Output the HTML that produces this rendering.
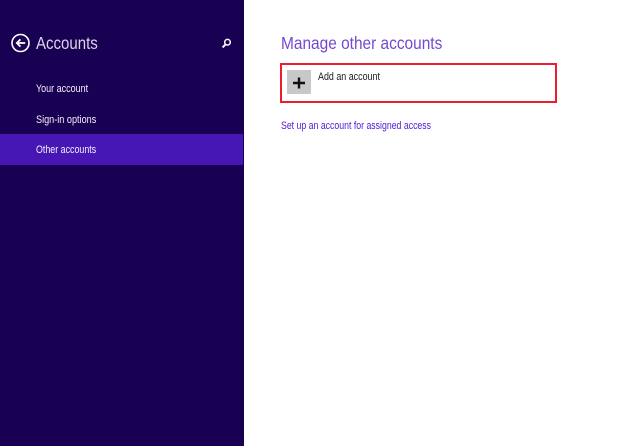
<!DOCTYPE html>
<html>
<head>
<meta charset="utf-8">
<style>
html,body{margin:0;padding:0;width:624px;height:446px;overflow:hidden;background:#fff;font-family:"Liberation Sans",sans-serif}
#page{position:relative;width:624px;height:446px;overflow:hidden}
#side{position:absolute;left:0;top:0;width:244px;height:446px;background:#180052}
#sel{position:absolute;left:0;top:134px;width:243px;height:31px;background:#4617b4}
.t{position:absolute;white-space:nowrap;line-height:1;transform-origin:0 50%;filter:blur(.3px)}
.nav{left:36px;font-size:11px;color:#f4f0fb}
svg{position:absolute;overflow:visible;filter:blur(.25px)}
</style>
</head>
<body>
<div id="page">
<div id="side"></div>
<div id="sel"></div>
<svg style="left:11px;top:33px" width="20" height="20" viewBox="0 0 20 20">
<circle cx="9.5" cy="10" r="8.5" fill="none" stroke="#fff" stroke-width="1.6"/>
<path d="M14.2 10H6M9.4 6.4L5.8 10L9.4 13.6" fill="none" stroke="#fff" stroke-width="1.8"/>
</svg>
<div class="t" style="left:36px;top:34.5px;font-size:17.5px;color:#dcd6ec;transform:scaleX(.858)">Accounts</div>
<svg style="left:221px;top:38px" width="11" height="11" viewBox="0 0 11 11">
<circle cx="6.5" cy="4.2" r="2.8" fill="none" stroke="#fff" stroke-width="1.5"/>
<path d="M4.5 6.4L1.6 9.4" stroke="#fff" stroke-width="2"/>
</svg>
<div class="t nav" style="top:83.5px;transform:scaleX(.817)">Your account</div>
<div class="t nav" style="top:114.5px;transform:scaleX(.828)">Sign-in options</div>
<div class="t nav" style="top:144.5px;transform:scaleX(.807)">Other accounts</div>

<div class="t" style="left:281px;top:34.5px;font-size:17.5px;color:#7548d2;transform:scaleX(.882)">Manage other accounts</div>
<div style="position:absolute;left:280px;top:63px;width:273px;height:36px;border:2px solid #ed1c2e"></div>
<div style="position:absolute;left:287px;top:70px;width:24px;height:24px;background:#c8c8c8"></div>
<svg style="left:287px;top:70px" width="24" height="24" viewBox="0 0 24 24">
<path d="M6 13H18M12 7.5V18.5" stroke="#111" stroke-width="2.4"/>
</svg>
<div class="t" style="left:318px;top:71.5px;font-size:11px;color:#1a1a1a;transform:scaleX(.81)">Add an account</div>
<div class="t" style="left:281px;top:121px;font-size:11px;color:#5218d4;transform:scaleX(.794)">Set up an account for assigned access</div>
</div>
</body>
</html>
